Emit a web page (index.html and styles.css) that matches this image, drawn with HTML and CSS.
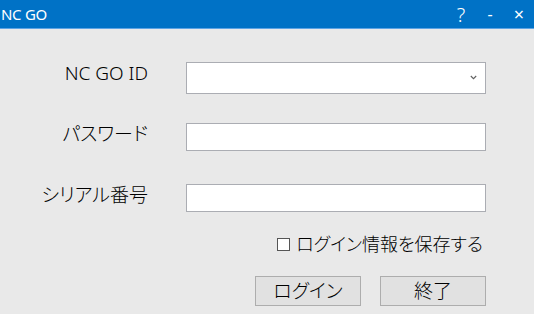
FILE: index.html
```html
<!DOCTYPE html>
<html lang="ja">
<head>
<meta charset="utf-8">
<title>NC GO</title>
<link rel="stylesheet" href="styles.css">
</head>
<body>
<div class="window">
  <header class="titlebar">
    <span class="title latin">NC GO</span>
    <div class="controls">
      <span class="ctl help latin">?</span>
      <span class="ctl min latin">-</span>
      <span class="ctl close latin">×</span>
    </div>
  </header>
  <main class="content">
    <div class="form">
      <label class="label label-latin">NC GO ID</label>
      <div class="combo">
        <svg class="chev" width="7" height="5" viewBox="0 0 7 5"><path d="M0.8 1 L3.5 3.7 L6.2 1" fill="none" stroke="#606060" stroke-width="1.1"/></svg>
      </div>
      <label class="label">パスワード</label>
      <div class="field"></div>
      <label class="label">シリアル番号</label>
      <div class="field"></div>
    </div>
    <div class="remember">
      <span class="checkbox"></span>
      <span class="remember-text">ログイン情報を保存する</span>
    </div>
    <div class="buttons">
      <button class="btn">ログイン</button>
      <button class="btn">終了</button>
    </div>
  </main>
</div>
</body>
</html>
```
FILE: styles.css
```css
html, body {
  margin: 0;
  padding: 0;
  background: #e9e9e9;
}
body {
  font-family: "Noto Sans", "Noto Sans CJK JP", sans-serif;
  font-weight: 300;
  color: #000;
  width: 534px;
  height: 314px;
  overflow: hidden;
}
.latin {
  font-weight: 400;
}
.titlebar {
  height: 28px;
  background: #0072c6;
  border-bottom: 1px solid #5ea4e4;
  display: flex;
  align-items: center;
  justify-content: space-between;
  color: #fff;
}
.title {
  font-size: 15px;
  padding-left: 1px;
  letter-spacing: -0.3px;
}
.controls {
  display: flex;
  align-items: center;
  height: 100%;
}
.ctl {
  display: flex;
  align-items: center;
  justify-content: center;
  color: #fff;
}
.help {
  font-size: 20px;
  font-weight: 300;
  width: 22px;
  margin-right: 12px;
}
.min {
  font-size: 16px;
  width: 12px;
  margin-right: 16px;
}
.close {
  font-size: 18px;
  width: 14px;
  margin-right: 8px;
}
.content {
  width: 486px;
}
.form {
  display: grid;
  grid-template-columns: 148px 300px;
  grid-template-rows: 61px 61px 28px;
  column-gap: 38px;
  padding-top: 33px;
}
.label {
  text-align: right;
  font-size: 19px;
  line-height: 22px;
  font-feature-settings: "palt";
  padding-top: 0;
}
.label-latin {
  font-weight: 350;
}
.combo, .field {
  box-sizing: border-box;
  background: #fff;
  border: 1px solid #abadb3;
}
.combo {
  height: 32px;
  display: flex;
  align-items: center;
  justify-content: flex-end;
  padding-right: 8px;
}
.chev {
  margin-top: -1px;
}
.field {
  height: 28px;
}
.remember {
  display: flex;
  justify-content: flex-end;
  align-items: center;
  margin-top: 21px;
  padding-right: 3px;
}
.checkbox {
  width: 13px;
  height: 13px;
  box-sizing: border-box;
  border: 1px solid #555;
  background: #fff;
  margin-right: 6px;
}
.remember-text {
  font-size: 18px;
  line-height: 22px;
  font-feature-settings: "palt";
}
.buttons {
  display: flex;
  justify-content: flex-end;
  gap: 19px;
  margin-top: 21px;
}
.btn {
  width: 106px;
  height: 30px;
  box-sizing: border-box;
  background: #e1e1e1;
  border: 1px solid #adadad;
  border-radius: 0;
  font-family: "Noto Sans", "Noto Sans CJK JP", sans-serif;
  font-weight: 300;
  font-size: 19px;
  line-height: 1;
  padding: 0;
  color: #000;
  font-feature-settings: "palt";
}
```
